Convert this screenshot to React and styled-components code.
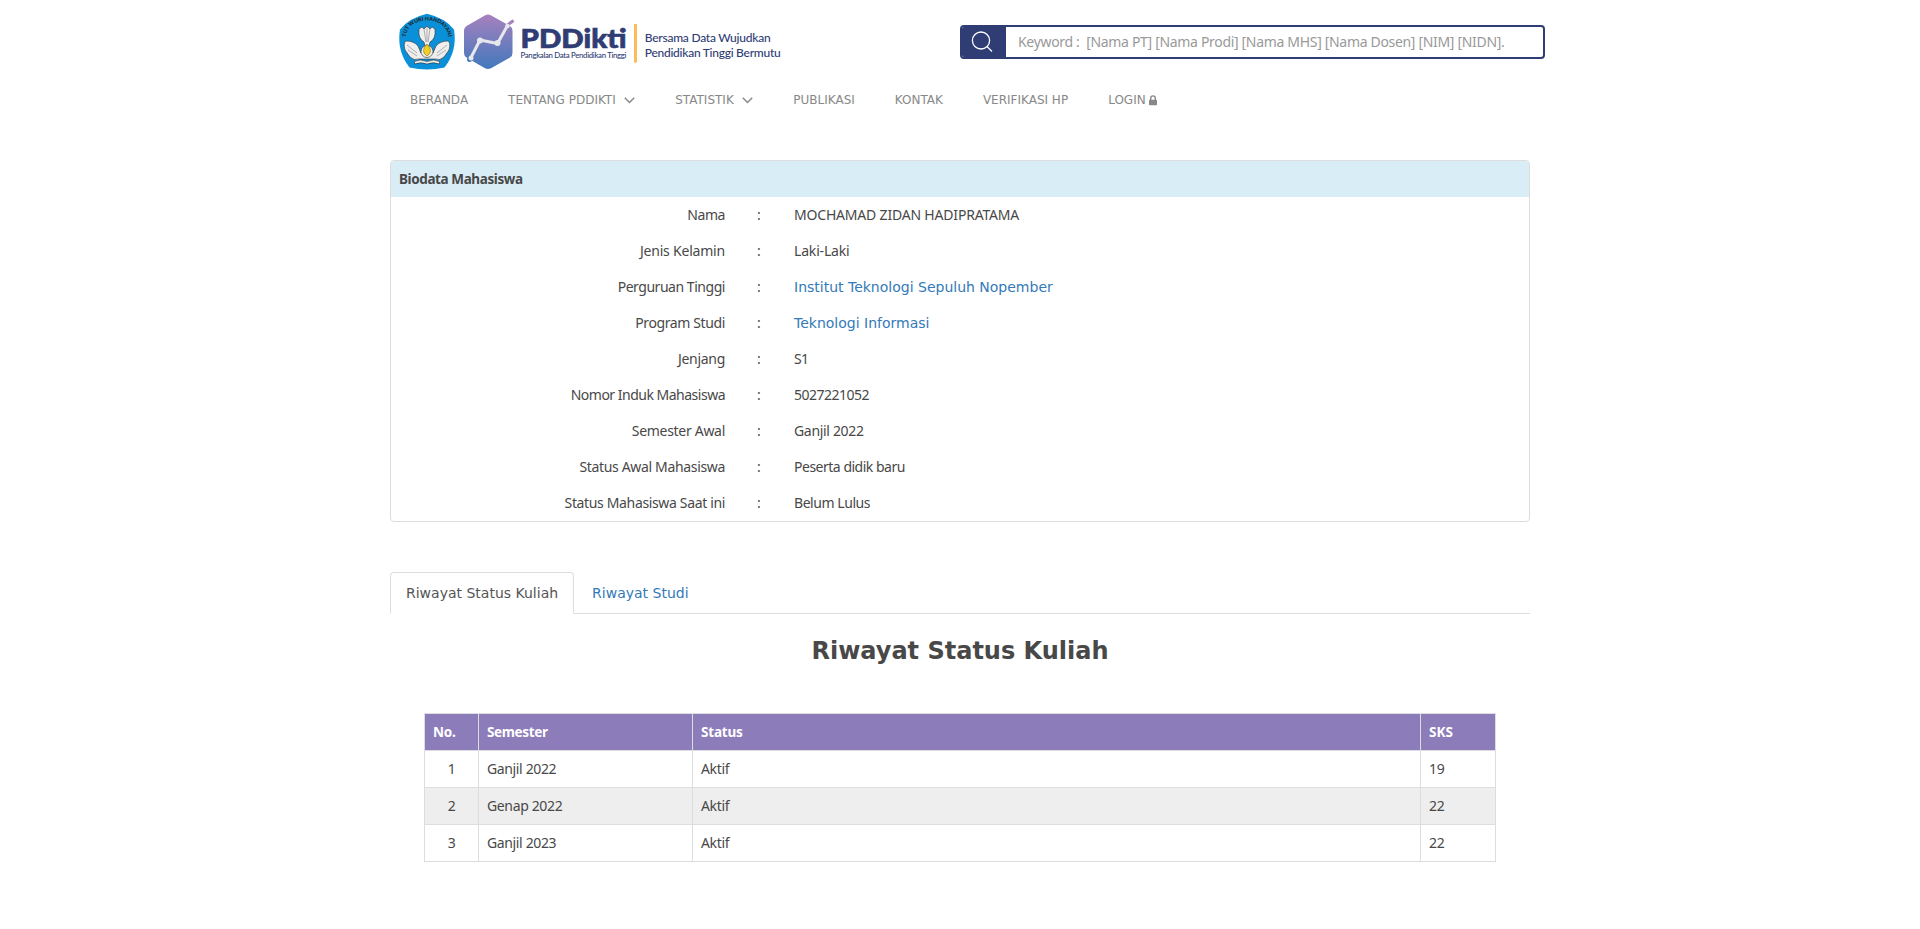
import React from "react";
import styled, { createGlobalStyle } from "styled-components";

const GlobalStyle = createGlobalStyle`
  *, *::before, *::after { box-sizing: border-box; }
  body { margin: 0; background: #fff; color: #484848; font: 14px/20px "DejaVu Sans", sans-serif; }
  a { color: #337ab7; text-decoration: none; }
`;

const bodyFont = `"Noto Sans", sans-serif`;

const Page = styled.div`
  width: 1170px;
  margin: 0 auto;
  padding: 0 15px;
`;
const Header = styled.header`
  display: flex;
  justify-content: space-between;
  height: 80px;
  margin-right: -15px;
`;
const Logo = styled.svg`
  display: block;
  width: 400px;
  height: 80px;
`;
const Search = styled.div`
  display: flex;
  width: 585px;
  height: 34px;
  margin-top: 25px;
  border: 2px solid #303d75;
  border-radius: 4px;
  overflow: hidden;
`;
const SearchButton = styled.button`
  width: 44px;
  padding: 0 4px 0 0;
  border: 0;
  background: #303d75;
  display: flex;
  align-items: center;
  justify-content: center;
`;
const Placeholder = styled.div`
  padding-left: 12px;
  font: 14px/30px ${bodyFont};
  letter-spacing: -0.32px;
  color: #999;
  white-space: pre;
`;
const Nav = styled.nav`
  display: flex;
  gap: 40px;
  height: 40px;
  padding-left: 20px;
  align-items: center;
`;
const NavItem = styled.a`
  display: flex;
  align-items: center;
  font-size: 12px;
  line-height: 20px;
  && { color: #888; }
  svg { margin-left: ${(p) => p.$gap || 8.5}px; }
`;
const Panel = styled.section`
  margin-top: 40px;
  border: 1px solid #ddd;
  border-radius: 4px;
  overflow: hidden;
`;
const PanelTitle = styled.div`
  height: 36px;
  padding: 0 8px;
  background: #d9edf7;
  font: bold 13.5px/37px ${bodyFont};
  letter-spacing: -0.4px;
`;
const BioRow = styled.div`
  display: grid;
  grid-template-columns: 341px 54px 1fr;
  height: 36px;
  font: 14px/36px ${bodyFont};
`;
const BioLabel = styled.div`
  padding-right: 7px;
  text-align: right;
  letter-spacing: ${(p) => p.$ls || 0}px;
`;
const Colon = styled.div`
  text-align: center;
`;
const BioValue = styled.div`
  padding-left: 8px;
  letter-spacing: ${(p) => p.$ls || 0}px;
  a { font-family: "DejaVu Sans", sans-serif; }
`;
const Tabs = styled.div`
  display: flex;
  gap: 2px;
  height: 42px;
  margin-top: 50px;
  border-bottom: 1px solid #ddd;
`;
const Tab = styled.a`
  height: 42px;
  padding: 10px 15px;
  border: 1px solid ${(p) => (p.$active ? "#ddd" : "transparent")};
  border-bottom-color: ${(p) => (p.$active ? "#fff" : "transparent")};
  border-radius: 4px 4px 0 0;
  && { color: ${(p) => (p.$active ? "#555" : "#337ab7")}; }
`;
const Title = styled.h3`
  margin: 21px 0 0;
  font-size: 24px;
  line-height: 32px;
  text-align: center;
`;
const Table = styled.table`
  width: 1072px;
  margin: 46px auto 0;
  border: solid #ddd;
  border-width: 1px 0 0 1px;
  border-spacing: 0;
  table-layout: fixed;
  font: 14px/20px ${bodyFont};
`;
const Col = styled.col`
  width: ${(p) => p.$w}px;
`;
const Row = styled.tr`
  height: 37px;
  background: ${(p) => (p.$shade ? "#eee" : "#fff")};
`;
const Th = styled.th`
  padding: 0 8px;
  border: solid #ddd;
  border-width: 0 1px 1px 0;
  background: #8c7dba;
  color: #fff;
  text-align: left;
  font-size: 13.5px;
  letter-spacing: ${(p) => p.$ls ?? -0.2}px;
`;
const Td = styled.td`
  padding: 0 8px;
  border: solid #ddd;
  border-width: 0 1px 1px 0;
  text-align: ${(p) => (p.$center ? "center" : "left")};
  letter-spacing: -0.36px;
`;

const Chevron = () => (
  <svg width="11" height="8" viewBox="0 0 11 8" fill="none" stroke="#888" strokeWidth="1.5">
    <path d="M.8 1.8 5.5 6.500 10.2 1.8" />
  </svg>
);
const Lock = () => (
  <svg width="8" height="11" viewBox="0 0 8 11">
    <path d="M1.7 5V3.2a2.3 2.3 0 0 1 4.6 0V5" fill="none" stroke="#888" strokeWidth="1.4" />
    <rect y="4.7" width="8" height="5.6" rx=".7" fill="#888" />
  </svg>
);

function Brand() {
  return (
    <Logo viewBox="390 0 400 80" fontFamily="Lato, sans-serif" fill="#303d75">
      <defs>
        <linearGradient id="hex" x1="0" y1="0" x2="0" y2="1">
          <stop offset="0" stopColor="#a681bd" />
          <stop offset="1" stopColor="#4278bd" />
        </linearGradient>
      </defs>
      <path d="M427 13.800Q445 18 454 29.500Q457.500 51 444.500 67.500Q427 71.500 409.500 67.500Q396.500 51 400 29.500Q409 18 427 13.800Z" fill="#0a90d8" />
      <path id="arc" d="M406 42C404 31 412 20.500 427 20.500S450 31 448 42" fill="none" />
      <text fontSize="5.300" fontWeight="900" fill="#222"><textPath href="#arc" startOffset="50%" textAnchor="middle">TUT WURI HANDAYANI</textPath></text>
      <g fill="#eee" stroke="#333" strokeWidth=".6" strokeLinejoin="round">
        <path d="M405 50Q403 43 406 41Q414 41 418 46L421 53Q422 47 425 45.500L424 42Q418 39 419 29L422 27 424 29 427 26 430 29 432 27 435 29Q436 39 430 42L429 45.500Q432 47 433 53L436 46Q440 41 448 41Q451 43 449 50L444 57Q440 61 435 59H419Q414 61 410 57Z" />
        <path d="M424 29 426 42M427 26V42M430 29 428 42M407 45 417 53M408 50 417 56M447 45 437 53M446 50 437 56" fill="none" strokeWidth=".35" />
        <path d="M427 61.500Q420 58.500 414.500 61.500V64Q421 61.500 427 64Q433 61.500 439.500 64V61.500Q434 58.500 427 61.500Z" />
        <circle cx="427" cy="51.500" r="6" />
      </g>
      <path d="M427 44Q434 51.500 427 56Q420 51.500 427 44Z" fill="#f2cf24" stroke="#775b13" strokeWidth=".5" />
      <path d="M485.200 15.200Q488 13.800 490.800 15.200L510 26Q512.500 27.500 512.500 30.500V53Q512.500 56 510 57.500L491 68.200Q488 69.800 485 68.200L466.500 57.500Q464 56 464 53V30.500Q464 27.500 466.500 26Z" fill="url(#hex)" />
      <path d="M507 25.500 513.500 20.500" stroke="#a681bd" strokeWidth="3" />
      <circle cx="469.500" cy="59.500" r="2.500" fill="#4278bd" />
      <path d="M471 57.500 480 40 497.500 43.500 507.500 25.500" fill="none" stroke="#e6e6ec" strokeWidth="3" />
      <g fill="#e6e6ec">
        <circle cx="480" cy="40.500" r="3" />
        <circle cx="497.500" cy="43" r="3" />
        <circle cx="471" cy="58" r="2.500" />
        <circle cx="507.500" cy="26" r="2.300" />
      </g>
      <text x="520.500" y="48" fontSize="26.500" fontWeight="900" textLength="106" lengthAdjust="spacingAndGlyphs" stroke="#303d75" strokeWidth=".7">PDDikti</text>
      <text x="520.500" y="58.300" fontSize="7.800" fontWeight="500" textLength="106">Pangkalan Data Pendidikan Tinggi</text>
      <rect x="634" y="24" width="3" height="38.600" fill="#fdbb5b" />
      <text x="644.700" y="41.700" fontSize="12" fontWeight="500" textLength="126">Bersama Data Wujudkan</text>
      <text x="644.700" y="57" fontSize="12" fontWeight="500" textLength="136">Pendidikan Tinggi Bermutu</text>
    </Logo>
  );
}

const bio = [
  { label: "Nama", ls: -0.45, value: "MOCHAMAD ZIDAN HADIPRATAMA", vs: -0.19 },
  { label: "Jenis Kelamin", ls: -0.2, value: "Laki-Laki", vs: -0.17 },
  { label: "Perguruan Tinggi", ls: -0.46, value: "Institut Teknologi Sepuluh Nopember", link: true },
  { label: "Program Studi", ls: -0.38, value: "Teknologi Informasi", link: true },
  { label: "Jenjang", ls: -0.3, value: "S1", vs: -0.8 },
  { label: "Nomor Induk Mahasiswa", ls: -0.5, value: "5027221052", vs: -0.5 },
  { label: "Semester Awal", ls: -0.3, value: "Ganjil 2022", vs: -0.32 },
  { label: "Status Awal Mahasiswa", ls: -0.34, value: "Peserta didik baru", vs: -0.49 },
  { label: "Status Mahasiswa Saat ini", ls: -0.35, value: "Belum Lulus", vs: -0.45 },
];
const history = [
  ["1", "Ganjil 2022", "Aktif", "19"],
  ["2", "Genap 2022", "Aktif", "22"],
  ["3", "Ganjil 2023", "Aktif", "22"],
];

export default function App() {
  return (
    <Page>
      <GlobalStyle />
      <Header>
        <Brand />
        <Search>
          <SearchButton aria-label="Cari">
            <svg width="24" height="24" viewBox="0 0 24 24" fill="none" stroke="#fff" strokeWidth="1.3">
              <ellipse cx="11" cy="10.500" rx="8.600" ry="8.500" />
              <path d="m17 16.500 5 5" />
            </svg>
          </SearchButton>
          <Placeholder>{"Keyword :  [Nama PT] [Nama Prodi] [Nama MHS] [Nama Dosen] [NIM] [NIDN]."}</Placeholder>
        </Search>
      </Header>
      <Nav>
        <NavItem>BERANDA</NavItem>
        <NavItem>TENTANG PDDIKTI<Chevron /></NavItem>
        <NavItem>STATISTIK<Chevron /></NavItem>
        <NavItem>PUBLIKASI</NavItem>
        <NavItem>KONTAK</NavItem>
        <NavItem>VERIFIKASI HP</NavItem>
        <NavItem $gap={3.5}>LOGIN<Lock /></NavItem>
      </Nav>
      <Panel>
        <PanelTitle>Biodata Mahasiswa</PanelTitle>
        {bio.map(({ label, ls, value, vs, link }) => (
          <BioRow key={label}>
            <BioLabel $ls={ls}>{label}</BioLabel>
            <Colon>:</Colon>
            <BioValue $ls={vs}>{link ? <a>{value}</a> : value}</BioValue>
          </BioRow>
        ))}
      </Panel>
      <Tabs>
        <Tab $active>Riwayat Status Kuliah</Tab>
        <Tab>Riwayat Studi</Tab>
      </Tabs>
      <Title>Riwayat Status Kuliah</Title>
      <Table>
        <colgroup><Col $w={54} /><Col $w={214} /><Col $w={728} /><Col $w={75} /></colgroup>
        <thead>
          <Row><Th>No.</Th><Th $ls={-0.36}>Semester</Th><Th>Status</Th><Th $ls={0.1}>SKS</Th></Row>
        </thead>
        <tbody>
          {history.map(([no, semester, status, sks], i) => (
            <Row key={no} $shade={i % 2 === 1}>
              <Td $center>{no}</Td><Td>{semester}</Td><Td>{status}</Td><Td>{sks}</Td>
            </Row>
          ))}
        </tbody>
      </Table>
    </Page>
  );
}
